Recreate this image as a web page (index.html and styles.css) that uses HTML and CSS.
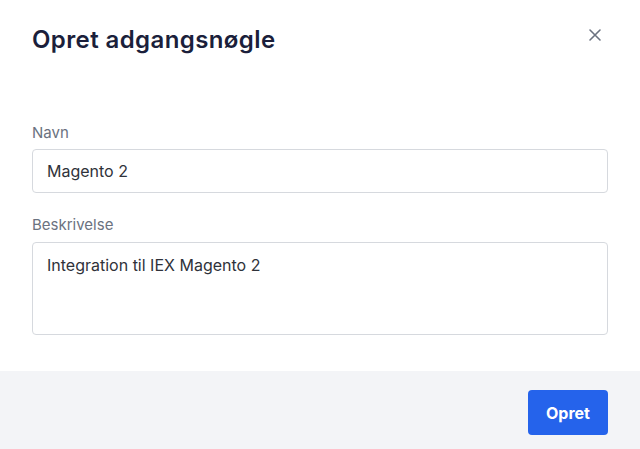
FILE: index.html
```html
<!DOCTYPE html>
<html lang="da">
<head>
<meta charset="utf-8">
<link rel="stylesheet" href="styles.css">
</head>
<body>
<div class="modal">
  <div class="content">
    <div class="header">
      <h1 class="title">Opret adgangsnøgle</h1>
      <button class="close" aria-label="Luk">
        <svg width="14" height="14" viewBox="0 0 14 14"><path d="M2 2 L12 12 M12 2 L2 12" stroke="#6b7280" stroke-width="1.6" stroke-linecap="round"/></svg>
      </button>
    </div>
    <div class="field">
      <label class="label">Navn</label>
      <div class="input">Magento 2</div>
    </div>
    <div class="field">
      <label class="label">Beskrivelse</label>
      <div class="input textarea">Integration til IEX Magento 2</div>
    </div>
  </div>
  <div class="footer">
    <button class="primary">Opret</button>
  </div>
</div>
</body>
</html>
```
FILE: styles.css
```css
html, body {
  margin: 0;
  padding: 0;
  background: #ffffff;
}
body {
  font-family: Inter, "Noto Sans", sans-serif;
  color: #1c2035;
}
.modal {
  width: 640px;
  height: 449px;
  display: flex;
  flex-direction: column;
  overflow: hidden;
}
.content {
  padding: 24px 32px 36px;
}
.header {
  display: flex;
  justify-content: space-between;
  align-items: center;
  height: 32px;
  margin-bottom: 67px;
}
.title {
  margin: 0;
  font-size: 24px;
  line-height: 32px;
  font-weight: 600;
  color: #1b1f3b;
  letter-spacing: 0.4px;
}
.close {
  border: 0;
  background: none;
  padding: 0;
  width: 14px;
  height: 14px;
  margin-right: 6px;
  margin-top: -10px;
  display: flex;
}
.field {
  display: flex;
  flex-direction: column;
}
.field + .field {
  margin-top: 22px;
}
.label {
  font-size: 15px;
  line-height: 20px;
  color: #6b7280;
  margin-bottom: 6px;
}
.input {
  box-sizing: border-box;
  height: 44px;
  border: 1px solid #d6d9de;
  border-radius: 4px;
  padding: 0 14px;
  font-size: 16px;
  letter-spacing: 0;
  line-height: 42px;
  color: #2f323a;
}
.textarea {
  height: 93px;
  line-height: 20px;
  padding-top: 12px;
  margin-top: 1px;
}
.footer {
  flex: 1;
  background: #f3f4f7;
  display: flex;
  justify-content: flex-end;
  align-items: flex-start;
  padding: 19px 32px 0;
}
.primary {
  width: 80px;
  height: 45px;
  border: 0;
  border-radius: 4px;
  background: #2563eb;
  color: #ffffff;
  font-family: Inter, "Noto Sans", sans-serif;
  font-size: 16px;
  font-weight: 700;
}
```
